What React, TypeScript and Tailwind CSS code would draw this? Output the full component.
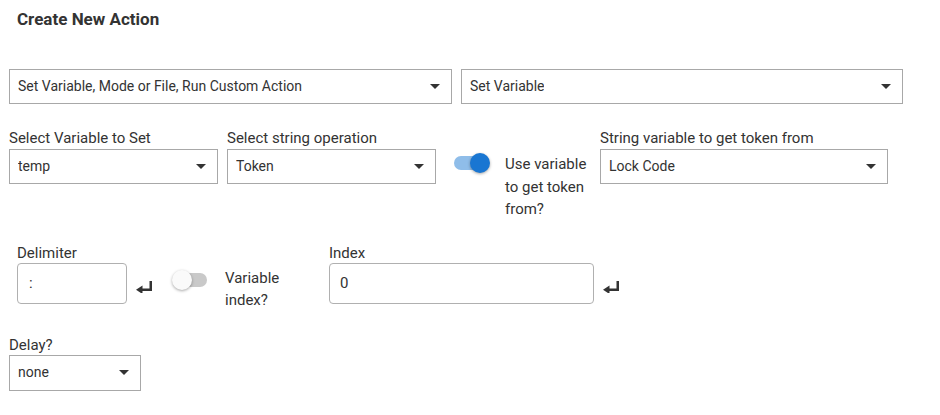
import { ReactNode } from "react";

const font = { fontFamily: "Roboto, 'Noto Sans', sans-serif" };

const Arrow = () => (
  <svg viewBox="0 0 10 5" className="w-[10px] h-[5px] shrink-0">
    <path d="M0 0 L10 0 L5 5 Z" fill="#333" />
  </svg>
);

// Icône "retour" : tête pleine + barre + montant
const ReturnIcon = () => (
  <svg viewBox="0 0 16 12" className="w-[16px] h-[12px] shrink-0">
    <path d="M13.5 0H16V10H5.5V7.5H13.5Z" fill="#333" />
    <path d="M0 8.75L6.5 4.5V13Z" fill="#333" />
  </svg>
);

// Select carré avec petite flèche
const Select = ({ value, className }: { value: string; className: string }) => (
  <div className={`flex items-center justify-between border border-[#a8a8a8] bg-white pl-[8px] pr-[11px] ${className}`}>
    <span className="text-[14px] text-[#333] truncate">{value}</span>
    <Arrow />
  </div>
);

const Switch = ({ on }: { on: boolean }) => (
  <div className="relative w-[37px] h-[20px] shrink-0 flex items-center">
    <div className={`ml-[1px] w-[34px] h-[14px] rounded-full ${on ? "bg-[#8fbde9]" : "bg-[#c9c9c9]"}`} />
    <div
      className={`absolute top-0 w-[20px] h-[20px] rounded-full shadow-[0_1px_3px_rgba(0,0,0,0.35)] ${
        on ? "right-0 bg-[#1976d2]" : "left-0 bg-[#fafafa]"
      }`}
    />
  </div>
);

const Label = ({ children }: { children: ReactNode }) => (
  <div className="text-[15px] leading-[20px] text-[#333]">{children}</div>
);

export default function App() {
  return (
    <div className="w-[940px] h-[415px] bg-white pl-[9px] pt-[8px]" style={font}>
      <h2 className="ml-[8px] text-[17px] leading-[22px] font-bold text-[#333]">Create New Action</h2>

      {/* Type d'action */}
      <div className="mt-[39px] flex gap-[9px]">
        <Select value="Set Variable, Mode or File, Run Custom Action" className="h-[35px] w-[443px]" />
        <Select value="Set Variable" className="h-[35px] w-[442px]" />
      </div>

      {/* Opération sur chaîne */}
      <div className="mt-[24px] flex items-start">
        <div className="w-[209px]">
          <Label>Select Variable to Set</Label>
          <Select value="temp" className="mt-[1px] h-[35px] w-full" />
        </div>
        <div className="ml-[9px] w-[209px]">
          <Label>Select string operation</Label>
          <Select value="Token" className="mt-[1px] h-[35px] w-full" />
        </div>
        <div className="ml-[17px] pt-[25px]">
          <Switch on />
        </div>
        <div className="ml-[15px] pt-[25px] w-[88px] text-[15px] leading-[22.5px] text-[#333]">
          Use variable to get token from?
        </div>
        <div className="ml-[7px] w-[288px]">
          <Label>String variable to get token from</Label>
          <Select value="Lock Code" className="mt-[1px] h-[35px] w-full" />
        </div>
      </div>

      {/* Délimiteur et index */}
      <div className="mt-[22px] ml-[8px] flex items-start">
        <div className="w-[110px]">
          <Label>Delimiter</Label>
          <div className="h-[41px] border border-[#b0b0b0] rounded-[4px] flex items-center px-[11px] text-[15px] text-[#333]">
            :
          </div>
        </div>
        <div className="ml-[9px] pt-[38px]">
          <ReturnIcon />
        </div>
        <div className="ml-[20px] pt-[27px]">
          <Switch on={false} />
        </div>
        <div className="ml-[16px] pt-[24px] w-[70px] text-[15px] leading-[22px] text-[#333]">
          Variable index?
        </div>
        <div className="ml-[34px] w-[265px]">
          <Label>Index</Label>
          <div className="h-[41px] border border-[#b0b0b0] rounded-[4px] flex items-center px-[10px] text-[15px] text-[#333]">
            0
          </div>
        </div>
        <div className="ml-[9px] pt-[38px]">
          <ReturnIcon />
        </div>
      </div>

      {/* Délai */}
      <div className="mt-[24px] w-[132px]">
        <Label>Delay?</Label>
        <Select value="none" className="h-[36px] w-full" />
      </div>
    </div>
  );
}
